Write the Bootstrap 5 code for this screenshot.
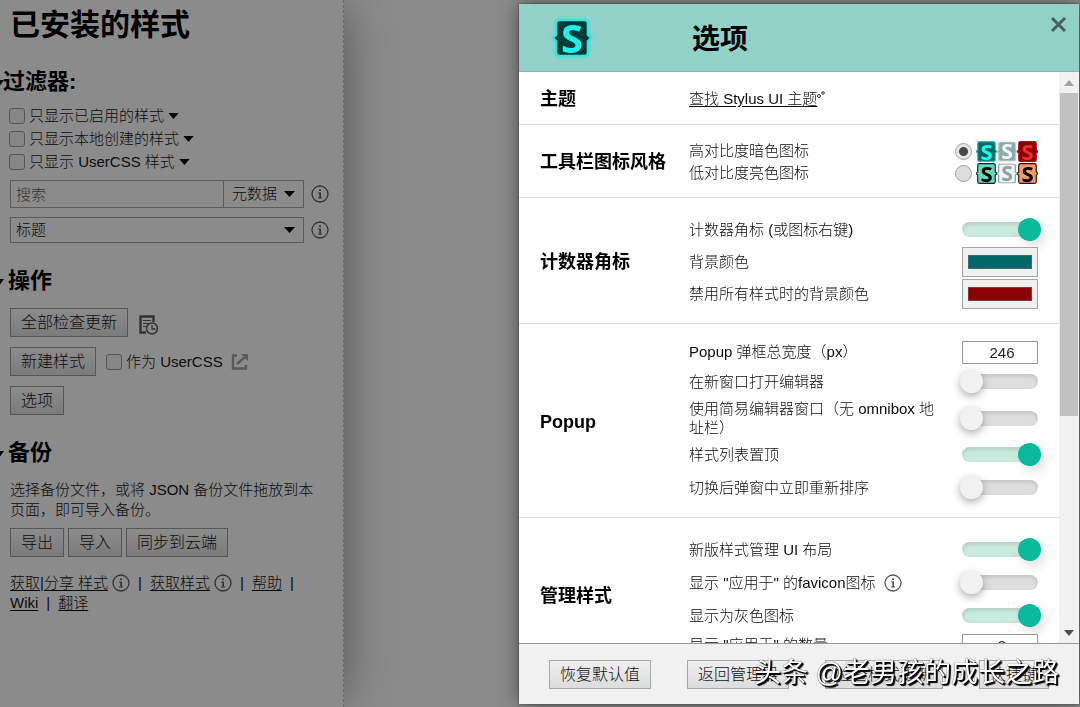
<!DOCTYPE html>
<html lang="zh-CN">
<head>
<meta charset="utf-8">
<meta name="viewport" content="width=device-width, initial-scale=1">
<title>已安装的样式</title>
<link href="https://cdn.jsdelivr.net/npm/bootstrap@5.3.0/dist/css/bootstrap.min.css" rel="stylesheet">
<style>
  body { font: 300 15px/20px "Liberation Sans", "Noto Sans CJK SC", sans-serif; background: #8b8b8b; color: #0c0c0c; min-height: 100vh; overflow: hidden; }
  h1, h2, h3, p { margin: 0; }
  h1, h2, h3 { font-weight: 700; color: #000; }
  a { color: inherit; text-underline-offset: 2px; }
  svg { flex: none; display: block; }

  /* manager sidebar */
  .manager { width: 344px; min-height: 100vh; padding: 5px 14px 0 10px; border-right: 1px dashed #6a6a6a; box-shadow: 4px 0 48px -10px #444; background: #8b8b8b; }
  .manager h1 { font-size: 30px; line-height: 40px; }
  .manager h2 { font-size: 22px; line-height: 30px; margin: 23px 0 0 -2px; position: relative; }
  .manager h2.flush { margin: 22px 0 0 -7px; }
  .manager h2::before { content: ""; position: absolute; left: -14px; top: 13px; border: 5px solid transparent; border-top: 7px solid #000; border-bottom: 0; }
  .manager h2.flush::before { left: -9px; }
  .filter-list { margin: 7px 0 0 -1px; }
  .filter-row { height: 23px; gap: 4px; }
  .tick { appearance: none; width: 16px; height: 16px; margin: 0; border: 1px solid #555; border-radius: 3px; background: #868686; flex: none; }
  .tick:checked { background: #333; }
  .field { border: 1px solid #5c5c5c; border-radius: 0; background: transparent; color: #0c0c0c; font-weight: 300; padding: 0 5px; height: 28px; min-width: 0; }
  .field::placeholder { color: #333; opacity: 1; }
  select.field { appearance: none; background: url("data:image/svg+xml,%3Csvg xmlns='http://www.w3.org/2000/svg' width='11' height='6'%3E%3Cpath d='M0 0h11L5.5 6z'/%3E%3C/svg%3E") no-repeat right 8px center; }
  .field-list { gap: 9px; margin-top: 7px; }
  .field-line { gap: 7px; }
  .scope { width: 81px; margin-left: -1px; padding-left: 8px !important; }
  .order { height: 26px !important; }
  .button-stack, .button-line { gap: 10px; }
  .push { height: 29px; padding: 0 10px; font-size: 16px; font-weight: 300; line-height: 27px; white-space: nowrap; border: 1px solid #565656; border-radius: 0; color: #0c0c0c; background: linear-gradient(#8c8c8c, #7b7b7b); }
  .push:hover { border-color: #222; }

  /* options dialog */
  .dialog { position: fixed; top: 4px; bottom: 3px; right: 1px; width: 52%; max-width: 560px; background: #fff; box-shadow: 0 0 20px #0007, 0 0 2px #444; }
  .dialog-head { background: #92d1c8; height: 68px; padding-left: 31px; border-bottom: 1px solid #8fb5af; }
  .dialog-head h2 { font-size: 28px; line-height: 40px; margin-left: 98px; padding-top: 4px; }
  .dialog-logo { filter: drop-shadow(0 0 2px #2ee6e2); }
  .closer { position: absolute; top: 12px; right: 12px; padding: 0; border: 0; background: none; }
  .section-row { padding: 15px 21px 13px; border-bottom: 1px solid #dedede; flex: none; }
  .section-row h3 { width: 149px; font-size: 18px; line-height: 24px; flex: none; }
  .opt { height: 33px; gap: 24px; }
  .opt.thin { height: 22px; }
  .opt.num { height: 26px; }
  .opt.color { height: 32px; }
  .opt.tall { height: 40px; line-height: 19px; }
  .toggle { appearance: none; width: 76px; height: 15px; margin: 0; border-radius: 8px; background: #dedede; box-shadow: inset 0 2px 4px #0002; flex: none; display: flex; align-items: center; }
  .toggle::before { content: ""; width: 23px; height: 23px; border-radius: 50%; background: #f1f1f1; box-shadow: 0 3px 9px #0005; flex: none; margin-left: -2px; }
  .toggle:checked { background: #c9eade; }
  .toggle:checked::before { background: #08b99c; box-shadow: 4px 5px 12px #0002; margin-left: 56px; }
  .digits { width: 76px; height: 23px; padding: 0 0 0 4px; border: 1px solid #999; text-align: center; color: #222; flex: none; }
  .swatch { appearance: none; width: 76px; height: 30px; border: 1px solid #a5a5a5; background: #f0f0f0; padding: 7px 5px; flex: none; }
  .swatch::-webkit-color-swatch-wrapper { padding: 0; }
  .swatch::-webkit-color-swatch { border: 1px solid #7777; border-radius: 0; }
  .pick { appearance: none; width: 17px; height: 17px; margin: 0; border: 1px solid #a0a0a0; border-radius: 50%; background: #dedede; }
  .pick:checked { background: radial-gradient(circle, #484848 4px, #e6e6e6 5px); }
  .logo-s { font: 700 38px "Open Sans", sans-serif; text-anchor: middle; }
  .rail { width: 20px; background: #f1f1f1; padding: 0 1px; flex: none; }
  .rail svg { margin: 8px auto 7px; }
  .thumb { height: 323px; background: #c1c1c1; }
  .dialog-foot { height: 61px; padding: 0 30px; background: #f1f1f1; border-top: 1px solid #999; }
  .dialog-foot .push { border-color: #a8a8a8; background: linear-gradient(#f0f0f0, #dcdcdc); color: #111; }
  .stamp { position: fixed; right: 21px; bottom: 15px; font-size: 27px; line-height: 38px; font-weight: 400; color: #fff; text-shadow: 1px 1px 1px #000, 2px 2px 1px #000, 0 0 1px #000; white-space: nowrap; pointer-events: none; }
</style>
<script src="https://cdn.jsdelivr.net/npm/bootstrap@5.3.0/dist/js/bootstrap.bundle.min.js"></script>
</head>
<body>
<svg class="d-none" aria-hidden="true">
  <symbol id="info" viewBox="0 0 18 18"><circle cx="9" cy="9" r="8" fill="none" stroke="currentColor" stroke-width="1.3"/><path d="M8 4.500h2v1.600H8zM7 7.500h3v5h1v1H7v-1h1.300v-4H7z" fill="currentColor"/></symbol>
  <symbol id="down" viewBox="0 0 12 7"><path d="M0 0h12L6 7z"/></symbol>
  <symbol id="stylus" viewBox="0 0 36 36"><path d="M6 1h24q3 0 3 3v11l3 3-3 3v11q0 3-3 3H6q-3 0-3-3V21l-3-3 3-3V4q0-3 3-3z" stroke="var(--edge)" stroke-width="2"/><text class="logo-s" x="18" y="32" fill="var(--ink)">S</text></symbol>
</svg>

<aside class="manager">
  <h1>已安装的样式</h1>

  <h2 class="flush">过滤器:</h2>
  <div class="filter-list">
    <div class="filter-row d-flex align-items-center"><input class="tick" type="checkbox" id="f1"><label for="f1">只显示已启用的样式</label><svg width="11" height="6"><use href="#down"/></svg></div>
    <div class="filter-row d-flex align-items-center"><input class="tick" type="checkbox" id="f2"><label for="f2">只显示本地创建的样式</label><svg width="11" height="6"><use href="#down"/></svg></div>
    <div class="filter-row d-flex align-items-center"><input class="tick" type="checkbox" id="f3"><label for="f3">只显示 UserCSS 样式</label><svg width="11" height="6"><use href="#down"/></svg></div>
  </div>
  <div class="field-list d-flex flex-column">
    <div class="field-line d-flex align-items-center">
      <div class="d-flex flex-grow-1">
        <input class="field flex-grow-1" type="search" placeholder="搜索" aria-label="搜索">
        <select class="field scope" aria-label="搜索范围"><option>元数据</option></select>
      </div>
      <svg width="18" height="18" color="#333"><use href="#info"/></svg>
    </div>
    <div class="field-line d-flex align-items-center">
      <select class="field order flex-grow-1" aria-label="排序"><option>标题</option></select>
      <svg width="18" height="18" color="#333"><use href="#info"/></svg>
    </div>
  </div>

  <h2>操作</h2>
  <div class="button-stack d-flex flex-column align-items-start pt-1 mt-2">
    <div class="button-line d-flex align-items-center">
      <button class="push" type="button">全部检查更新</button>
      <svg class="mt-1" width="21" height="22" viewBox="0 0 21 22" fill="none" stroke="#333"><path d="M8 18.500H2.500V2.500h13V8" stroke-width="2.400"/><path d="M5 6.500h8M5 9.500h6M5 12.500h3"/><circle cx="14" cy="14.500" r="5.500" fill="#8b8b8b" stroke-width="1.500"/><path d="M14 11v4h3.500" stroke-width="1.300"/></svg>
    </div>
    <div class="button-line d-flex align-items-center">
      <button class="push" type="button">新建样式</button>
      <div class="filter-row d-flex align-items-center"><input class="tick" type="checkbox" id="asCss"><label for="asCss">作为 UserCSS</label>
      <svg class="ms-1" width="18" height="18" viewBox="0 0 18 18" fill="none" stroke="#595959" stroke-width="2.400"><path d="M6 2.500H2v13h13V12M6 11l8-7"/><path d="M10 1h7v7z" fill="#595959" stroke="none"/></svg></div>
    </div>
    <button class="push" type="button">选项</button>
  </div>

  <h2>备份</h2>
  <p class="mt-2 pt-1 pe-1">选择备份文件，或将 JSON 备份文件拖放到本页面，即可导入备份。</p>
  <div class="d-flex gap-1 pt-1 mt-1">
    <button class="push" type="button">导出</button>
    <button class="push" type="button">导入</button>
    <button class="push" type="button">同步到云端</button>
  </div>
  <div class="mt-3">
    <div class="d-flex align-items-center"><a href="#">获取|分享 样式</a><svg class="ms-1" width="18" height="18" color="#333"><use href="#info"/></svg><span class="mx-2">|</span><a href="#">获取样式</a><svg class="ms-1" width="18" height="18" color="#333"><use href="#info"/></svg><span class="mx-2">|</span><a href="#">帮助</a><span class="mx-2">|</span></div>
    <div class="d-flex align-items-center"><a href="#">Wiki</a><span class="mx-2">|</span><a href="#">翻译</a></div>
  </div>
</aside>

<section class="dialog d-flex flex-column" role="dialog" aria-labelledby="dlgTitle">
  <header class="dialog-head d-flex align-items-center flex-shrink-0">
    <svg class="dialog-logo" width="44" height="44" viewBox="-3 -3 42 42" style="--edge:#2ee6e2;--ink:#1df2ee" fill="#023c38"><use href="#stylus" width="36" height="36"/></svg>
    <h2 id="dlgTitle">选项</h2>
    <button class="closer" type="button" aria-label="关闭"><svg width="17" height="17" viewBox="0 0 17 17" stroke="#4b5f5d" stroke-width="3"><path d="M2 2l13 13M15 2L2 15"/></svg></button>
  </header>

  <div class="d-flex flex-grow-1 overflow-hidden">
    <div class="flex-grow-1 d-flex flex-column overflow-hidden">
      <div class="section-row d-flex align-items-center">
        <h3>主题</h3>
        <div class="flex-grow-1"><div class="opt thin d-flex align-items-center"><a class="d-flex text-decoration-underline" href="#">查找 Stylus UI 主题<svg width="8" height="10" viewBox="0 0 8 10" fill="none" stroke="#333"><circle cx="2" cy="7" r="1.500"/><circle cx="6" cy="4" r="1.300"/></svg></a></div></div>
      </div>

      <div class="section-row d-flex align-items-center">
        <h3>工具栏图标风格</h3>
        <div class="flex-grow-1">
          <div class="opt thin d-flex align-items-center"><label class="flex-grow-1" for="i1">高对比度暗色图标</label>
            <div class="d-flex align-items-center"><input class="pick me-1" type="radio" name="icons" id="i1" checked>
              <svg width="21" height="21" viewBox="0 0 36 36" fill="#056763" style="--edge:#16c9c2;--ink:#1dfff0"><use href="#stylus"/></svg><svg width="20" height="21" viewBox="0 0 36 36" fill="#8faaa6" style="--edge:#b9cdca;--ink:#f0ffff"><use href="#stylus"/></svg><svg width="21" height="21" viewBox="0 0 36 36" fill="#850000" style="--edge:#b80c0c;--ink:#ff2a2a"><use href="#stylus"/></svg></div></div>
          <div class="opt thin d-flex align-items-center"><label class="flex-grow-1" for="i2">低对比度亮色图标</label>
            <div class="d-flex align-items-center"><input class="pick me-1" type="radio" name="icons" id="i2">
              <svg width="21" height="21" viewBox="0 0 36 36" fill="#68d8bd" style="--edge:#123;--ink:#000"><use href="#stylus"/></svg><svg width="20" height="21" viewBox="0 0 36 36" fill="#e6f6f2" style="--edge:#8a9794;--ink:#93a09d"><use href="#stylus"/></svg><svg width="21" height="21" viewBox="0 0 36 36" fill="#f29a6c" style="--edge:#2a1510;--ink:#000"><use href="#stylus"/></svg></div></div>
        </div>
      </div>

      <div class="section-row d-flex align-items-center">
        <h3>计数器角标</h3>
        <div class="flex-grow-1">
          <div class="opt d-flex align-items-center"><label class="flex-grow-1" for="o1">计数器角标 (或图标右键)</label><input class="toggle" type="checkbox" id="o1" checked></div>
          <div class="opt color d-flex align-items-center"><label class="flex-grow-1" for="o2">背景颜色</label><input class="swatch" type="color" id="o2" value="#006666"></div>
          <div class="opt color d-flex align-items-center"><label class="flex-grow-1" for="o3">禁用所有样式时的背景颜色</label><input class="swatch" type="color" id="o3" value="#8b0000"></div>
        </div>
      </div>

      <div class="section-row d-flex align-items-center">
        <h3>Popup</h3>
        <div class="flex-grow-1">
          <div class="opt num d-flex align-items-center"><label class="flex-grow-1" for="p1">Popup 弹框总宽度（px）</label><input class="digits" inputmode="numeric" id="p1" value="246"></div>
          <div class="opt d-flex align-items-center"><label class="flex-grow-1" for="p2">在新窗口打开编辑器</label><input class="toggle" type="checkbox" id="p2"></div>
          <div class="opt tall d-flex align-items-center"><label class="flex-grow-1" for="p3">使用简易编辑器窗口（无 omnibox 地址栏）</label><input class="toggle" type="checkbox" id="p3"></div>
          <div class="opt d-flex align-items-center"><label class="flex-grow-1" for="p4">样式列表置顶</label><input class="toggle" type="checkbox" id="p4" checked></div>
          <div class="opt d-flex align-items-center"><label class="flex-grow-1" for="p5">切换后弹窗中立即重新排序</label><input class="toggle" type="checkbox" id="p5"></div>
        </div>
      </div>

      <div class="section-row d-flex align-items-center">
        <h3>管理样式</h3>
        <div class="flex-grow-1">
          <div class="opt d-flex align-items-center"><label class="flex-grow-1" for="m1">新版样式管理 UI 布局</label><input class="toggle" type="checkbox" id="m1" checked></div>
          <div class="opt d-flex align-items-center"><div class="d-flex flex-grow-1 gap-2 align-items-center"><label for="m2">显示 "应用于" 的favicon图标</label><svg width="18" height="18" color="#555"><use href="#info"/></svg></div><input class="toggle" type="checkbox" id="m2"></div>
          <div class="opt d-flex align-items-center"><label class="flex-grow-1" for="m3">显示为灰色图标</label><input class="toggle" type="checkbox" id="m3" checked></div>
          <div class="opt num d-flex align-items-center"><label class="flex-grow-1" for="m4">显示 "应用于" 的数量</label><input class="digits" inputmode="numeric" id="m4" value="3"></div>
        </div>
      </div>
    </div>
    <div class="rail d-flex flex-column">
      <svg width="10" height="6" viewBox="0 0 12 7" fill="#a3a3a3"><path d="M0 7h12L6 0z"/></svg>
      <div class="thumb"></div>
      <svg class="mt-auto" width="10" height="6" fill="#505050"><use href="#down"/></svg>
    </div>
  </div>

  <footer class="dialog-foot d-flex align-items-center justify-content-between flex-shrink-0">
    <button class="push" type="button">恢复默认值</button>
    <button class="push" type="button">返回管理器</button>
    <button class="push" type="button">检查样式更新</button>
    <button class="push" type="button">快捷键</button>
  </footer>
</section>

<div class="stamp">头条 @老男孩的成长之路</div>
</body>
</html>
